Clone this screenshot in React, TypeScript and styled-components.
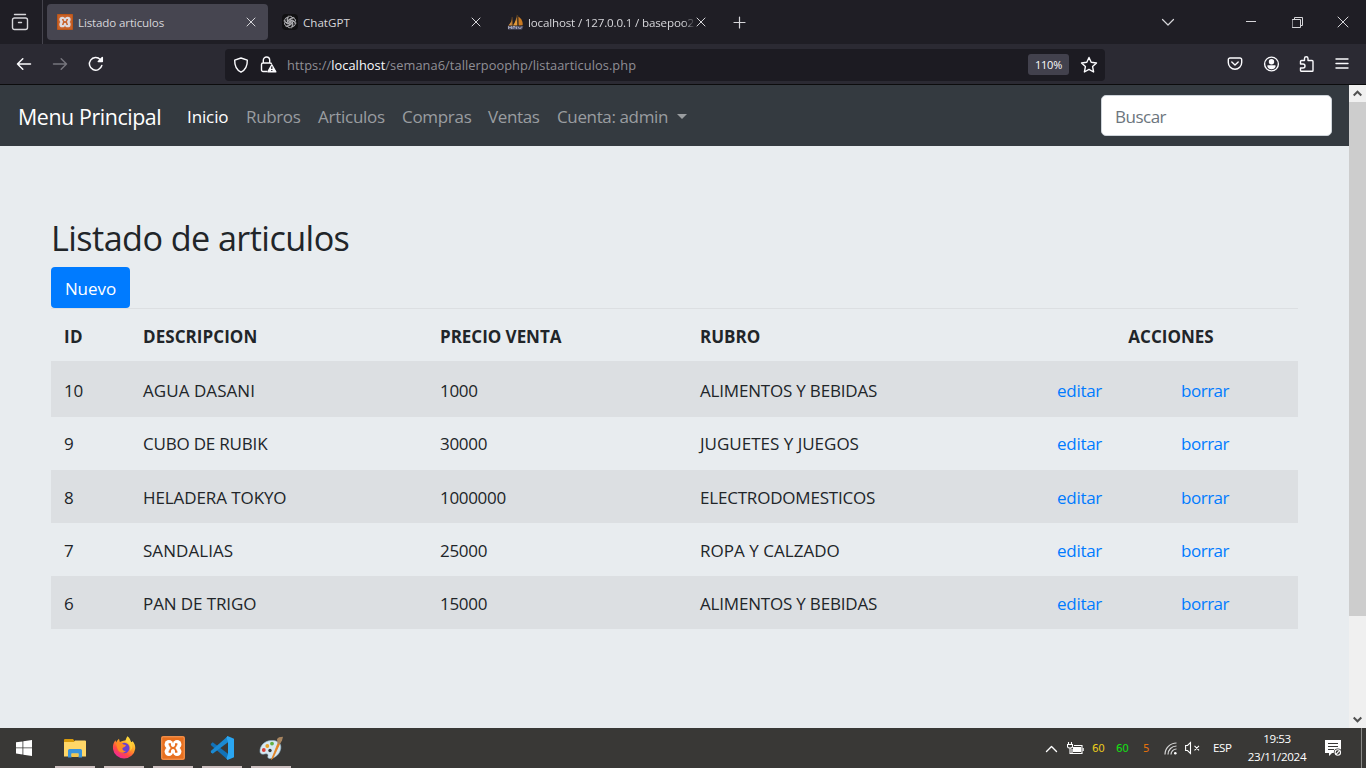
import React from 'react';
import styled, { createGlobalStyle, css } from 'styled-components';

const GlobalStyle = createGlobalStyle`
  *, *::before, *::after { box-sizing: border-box; }
  body {
    margin: 0;
    overflow: hidden;
    font-family: 'Open Sans', 'Noto Sans', sans-serif;
  }
`;

const Desktop = styled.div`
  display: flex;
  flex-direction: column;
  width: 1366px;
  height: 768px;
`;

const Text = styled.span<{ $ls?: number }>`
  letter-spacing: ${(p) => p.$ls ?? 0}px;
  white-space: pre;
`;

/* ---------- browser chrome ---------- */

const TabStrip = styled.header`
  display: flex;
  align-items: center;
  height: 44px;
  background: #1f1e25;
  color: #d6d6da;
`;

const FirefoxView = styled.div`
  display: flex;
  align-items: center;
  width: 43px;
  height: 44px;
  padding-left: 11px;
  border-right: 1px solid #45444d;
`;

const Tab = styled.div<{ $active?: boolean; $width: number }>`
  display: flex;
  align-items: center;
  width: ${(p) => p.$width}px;
  height: 36px;
  margin-left: 4px;
  padding: 0 12px 0 10px;
  border-radius: 4px;
  background: ${(p) => (p.$active ? '#464550' : 'transparent')};
`;

const TabTitle = styled.div<{ $fade?: boolean }>`
  flex: 1;
  min-width: 0;
  margin-left: 5px;
  padding-top: 1px;
  overflow: hidden;
  font-size: 11.6px;
  line-height: 18px;
  white-space: nowrap;
  ${(p) =>
    p.$fade &&
    css`
      margin-left: 4px;
      mask-image: linear-gradient(to right, #000 155px, transparent 168px);
    `}
`;

const NewTab = styled.div`
  display: flex;
  margin-left: 15px;
`;

const WindowControls = styled.div`
  display: flex;
  align-items: center;
  margin-left: auto;
  padding-right: 17px;
`;

const ControlSlot = styled.div<{ $gap: number }>`
  display: flex;
  margin-left: ${(p) => p.$gap}px;
`;

const Toolbar = styled.div`
  display: flex;
  align-items: center;
  height: 41px;
  padding: 0 17px 0 16px;
  background: #2b2a33;
  border-bottom: 1px solid #0c0c0d;
  color: #fbfbfe;
`;

const NavButtons = styled.div`
  display: flex;
  gap: 20px;
  width: 209px;
`;

const UrlBar = styled.div`
  display: flex;
  align-items: center;
  width: 880px;
  height: 32px;
  margin-top: 1px;
  padding: 0 7px 0 8px;
  border-radius: 4px;
  background: #1c1b22;
`;

const Url = styled.div`
  flex: 1;
  margin-left: 10px;
  font-size: 12.8px;
  line-height: 20px;
  letter-spacing: 0.064px;
  color: #908f96;
  b { font-weight: 400; color: #fbfbfe; }
`;

const Zoom = styled.div`
  width: 41px;
  height: 21px;
  margin-right: 11px;
  border-radius: 3px;
  background: #42414d;
  font-size: 11px;
  line-height: 21px;
  text-align: center;
`;

const ToolbarActions = styled.div`
  display: flex;
  align-items: center;
  gap: 16px;
  margin-left: auto;
`;

/* ---------- web page ---------- */

const Viewport = styled.div`
  display: flex;
  height: 643px;
`;

const Page = styled.div`
  width: 1349px;
  background: #e8ecef;
  color: #212529;
`;

const Navbar = styled.nav`
  display: flex;
  align-items: center;
  height: 61px;
  padding: 0 17px 0 18px;
  background: #343a40;
`;

const Brand = styled.div`
  width: 169px;
  padding-top: 2px;
  font-size: 21.4px;
  line-height: 32px;
  color: #fff;
`;

const NavItem = styled.div<{ $active?: boolean; $width: number }>`
  display: flex;
  align-items: center;
  width: ${(p) => p.$width}px;
  padding-top: 2px;
  font-size: 17px;
  line-height: 26px;
  color: ${(p) => (p.$active ? '#fff' : '#9a9da0')};
`;

const Caret = styled.i`
  margin: 0 0 0 9px;
  border-top: 5px solid currentColor;
  border-left: 5px solid transparent;
  border-right: 5px solid transparent;
`;

const Search = styled.div`
  width: 231px;
  height: 41px;
  margin-left: auto;
  padding-left: 13px;
  border: 1px solid #ced4da;
  border-radius: 5px;
  background: #fff;
  font-size: 17px;
  line-height: 41px;
  color: #6c757d;
`;

const Content = styled.main`
  padding: 69px 51px 0;
`;

const Title = styled.h1`
  margin: 0;
  height: 52px;
  font-size: 34.2px;
  font-weight: 400;
  line-height: 45px;
`;

const NewButton = styled.div`
  width: 79px;
  height: 41px;
  border-radius: 4px;
  background: #007bff;
  color: #fff;
  font-size: 17px;
  line-height: 43px;
  text-align: center;
`;

const Table = styled.table`
  width: 1247px;
  table-layout: fixed;
  border-collapse: separate;
  border-spacing: 0;
  font-size: 17px;
  line-height: 26px;
`;

const Th = styled.th<{ $width?: number }>`
  width: ${(p) => p.$width}px;
  height: 53px;
  padding: 3px 13px 0;
  border-top: 1px solid #dcdfe2;
  text-align: left;
  &:last-child { text-align: center; }
`;

const Row = styled.tr<{ $height: number; $striped: boolean }>`
  height: ${(p) => p.$height}px;
  background: ${(p) => (p.$striped ? '#dcdfe2' : 'transparent')};
`;

const Td = styled.td<{ $shift?: number }>`
  padding: ${(p) => p.$shift ?? 2}px 13px 0;
`;

const Action = styled(Td)<{ $last?: boolean }>`
  padding-left: ${(p) => (p.$last ? 10 : 13)}px;
  color: #007bff;
`;

const Scrollbar = styled.div`
  display: flex;
  flex-direction: column;
  align-items: center;
  width: 17px;
  background: #f0f0f0;
`;

const ScrollArrow = styled.div`
  display: flex;
  align-items: center;
  height: 17px;
`;

const Thumb = styled.div`
  width: 17px;
  height: 514px;
  margin-bottom: auto;
  background: #cdcdcd;
`;

/* ---------- taskbar ---------- */

const Taskbar = styled.footer`
  display: flex;
  height: 40px;
  background: #393836;
  color: #fff;
`;

const StartButton = styled.div`
  display: flex;
  align-items: center;
  width: 55px;
  padding-left: 16px;
`;

const AppButton = styled.div`
  display: flex;
  align-items: center;
  justify-content: center;
  width: 40px;
  margin-right: 9px;
  padding-top: 2px;
  border-bottom: 2px solid #cbbfbf;
`;

const Tray = styled.div`
  display: flex;
  align-items: center;
  margin-left: auto;
  font-size: 11.6px;
  line-height: 18px;
`;

const TraySlot = styled.div<{ $width: number }>`
  display: flex;
  align-items: center;
  width: ${(p) => p.$width}px;
`;

const Reading = styled.div<{ $color: string }>`
  width: 24px;
  color: ${(p) => p.$color};
  font-family: 'DejaVu Sans', sans-serif;
  font-size: 10.4px;
  letter-spacing: -0.4px;
`;

const Clock = styled.div`
  display: flex;
  flex-direction: column;
  align-items: center;
  width: 64px;
  margin-right: 16px;
`;

const PeekEdge = styled.div`
  width: 5px;
  height: 40px;
  border-left: 1px solid #8a8a88;
`;

/* ---------- icons ---------- */

const Stroke = ({ size = 16, w = 1.3, children, vb }: { size?: number; w?: number; vb?: string; children: React.ReactNode }) => (
  <svg width={size} height={size} viewBox={vb ?? `0 0 ${size} ${size}`} fill="none" stroke="currentColor" strokeWidth={w} strokeLinecap="round" strokeLinejoin="round">
    {children}
  </svg>
);

const XamppIcon = ({ size, muted }: { size: number; muted?: boolean }) => {
  const back = muted ? '#c8622a' : '#e8701f';
  const front = muted ? '#dedbe0' : '#fff';
  return (
    <svg width={size} height={size} viewBox="0 0 24 24">
      <rect width="24" height="24" rx="2" fill={back} />
      <rect x="0.8" y="0.8" width="22.4" height="22.4" rx="1.5" fill="none" stroke={muted ? '#b4500f' : '#f19a5c'} strokeWidth="1" />
      <g fill={front}>
        <circle cx="7.900" cy="8.400" r="4.300" />
        <circle cx="16.100" cy="8.400" r="4.300" />
        <circle cx="7.900" cy="15.600" r="4.300" />
        <circle cx="16.100" cy="15.600" r="4.300" />
        <rect x="6" y="8" width="12" height="8" />
      </g>
      <path d="M7.600 8.300H9C9 11 11 12 12 12S15 13 15 15.700H16.400M16.400 8.300H15C15 11 13 12 12 12S9 13 9 15.700H7.600" fill="none" stroke={back} strokeWidth="1.900" />
    </svg>
  );
};

const ChatIcon = () => (
  <svg width="16" height="16" viewBox="0 0 16 16">
    <rect width="16" height="16" rx="4" fill="#101012" />
    <g fill="none" stroke="#c4c4c8" strokeWidth="0.8">
      {[0, 60, 120, 180, 240, 300].map((a) => (
        <path key={a} transform={`rotate(${a} 8 8)`} d="M5.800 9.200V4.600A2.500 2.500 0 0 1 10.300 3.200M7.200 8.400V5.200L10 3.600A2.400 2.400 0 0 1 12.500 3.900" />
      ))}
    </g>
  </svg>
);

const SailIcon = () => (
  <svg width="17" height="16" viewBox="0 0 17 16">
    <path d="M5 2.500C5.200 6 4 9 1.200 11.500H5.600Z" fill="#d08b3c" />
    <path d="M9.300 .3C9.800 4 8.600 8 6 11.500H10.400Z" fill="#e39a3a" />
    <path d="M11.300 2.600C15 5 16 8.500 15.600 11.300L11.600 11.500Z" fill="#c97a22" />
    <path d="M10.600 1V11.500M5.200 3V11" stroke="#6f4a22" strokeWidth=".7" />
    <path d="M.8 12.200H16.400L15 15.600H1Z" fill="#55566f" />
    <path d="M1.500 15V12.300L3 14 4.500 12.300V15M6 15V12.500H8V14.200M9.500 15V12.500M11 12.500L12.500 15M14.800 12.500L13 15" stroke="#a9abc0" strokeWidth=".9" fill="none" />
  </svg>
);

const CloseIcon = () => (
  <Stroke size={10} w={1}><path d="M1 1L9 9M9 1L1 9" /></Stroke>
);

const FolderIcon = () => (
  <svg width="22" height="19" viewBox="0 0 22 19">
    <path d="M0 1A1 1 0 0 1 1 0H9L10.500 2H21A1 1 0 0 1 22 3V17H0Z" fill="#d99b0b" />
    <path d="M0 3H10L11 1.500H21A1 1 0 0 1 22 2.500V17.500H0Z" fill="#ffd768" />
    <path d="M4 18.500V11.500A1.500 1.500 0 0 1 5.500 10H16.500A1.500 1.500 0 0 1 18 11.500V18.500H14.500V14.500H7.500V18.500Z" fill="#3b94da" />
    <path d="M7.500 18V14.500H14.500V18Z" fill="#f5c64d" />
  </svg>
);

const FirefoxIcon = () => (
  <svg width="24" height="24" viewBox="0 0 24 24">
    <defs>
      <linearGradient id="fox" x1=".8" y1=".1" x2=".25" y2=".95">
        <stop offset="0" stopColor="#ffe43f" />
        <stop offset=".4" stopColor="#ff9a26" />
        <stop offset=".7" stopColor="#ff4a45" />
        <stop offset="1" stopColor="#f0269b" />
      </linearGradient>
    </defs>
    <path d="M15.500 .3C18 2.500 18.500 4.500 19 6C20 6.200 20.500 5.500 20.500 5C22.800 7.500 23.500 10.500 23.200 13A11.200 11 0 0 1 1 13C.6 9 1.600 6.500 3.500 4.200L4.200 6.500C5 5 6 3.500 7 2.800L7.800 6C10.500 4.600 13 4.500 13.600 4.200C14 3 14.500 1.500 15.500 .3Z" fill="url(#fox)" />
    <circle cx="12.300" cy="12" r="5.200" fill="#6c3fd0" />
    <path d="M4 7C7 5.500 9.500 6.500 11.500 8.500L14 9C13.500 11 11.500 11 10.500 12C10 14 12 15.500 14 14.700C11 18.500 6 16.500 5.200 12Z" fill="#ff8a24" />
    <path d="M13.500 5.500C17.500 7 19.500 10.500 18 15C21 12.500 21 8.500 18.500 5.500L15.500 1.500Z" fill="#ffcf38" />
  </svg>
);

const CodeIcon = () => (
  <svg width="24" height="24" viewBox="0 0 24 24">
    <path d="M1 7.700L2.700 6.200 18 17.800V24L.8 9Z" fill="#1272b8" />
    <path d="M1 16.200L2.700 17.800 18 6.200V0L.8 15Z" fill="#1b8ad3" />
    <path d="M17.500 0L24 2.800V21.200L17.500 24 16.500 22.500 18 18V6L16.500 1.500Z" fill="#2aa6f2" />
  </svg>
);

const PaintIcon = () => (
  <svg width="25" height="24" viewBox="0 0 25 24">
    <path d="M12.500 4.500C5 4.800 .8 10 1 15.500C1.200 18.500 4 18.500 6.500 17.800C9 17.200 9.500 19 8.800 20.500C8.500 23 12 23.200 15 21.500C20 19 22.800 13.500 21.500 9C20.500 5.800 17 4.300 12.500 4.500Z" fill="#d6e8f2" stroke="#8fb6cc" strokeWidth=".6" />
    <circle cx="8.300" cy="10" r="1.900" fill="#e7a12a" />
    <circle cx="13" cy="7.600" r="1.900" fill="#61b044" />
    <circle cx="4.800" cy="14" r="1.900" fill="#d9413a" />
    <circle cx="11" cy="14.500" r="1.700" fill="#3a3a3a" />
    <path d="M18.800 7.500L20.500 8.300 14 22 12.500 23.500Z" fill="#e28221" stroke="#e28221" strokeWidth=".8" />
    <path d="M18.500 7.500L18 3L20 1.200L24 .8L23 4.500L20.800 8.200Z" fill="#a88560" />
  </svg>
);

/* ---------- data ---------- */

type Cell = [string, number];
const rows: { id: Cell; name: Cell; price: Cell; category: Cell; height: number; shift: number }[] = [
  { id: ['10', -0.24], name: ['AGUA DASANI', 0.06], price: ['1000', -0.3], category: ['ALIMENTOS Y BEBIDAS', -0.19], height: 56, shift: 4 },
  { id: ['9', 0], name: ['CUBO DE RUBIK', -0.2], price: ['30000', -0.3], category: ['JUGUETES Y JUEGOS', 0], height: 53, shift: 1 },
  { id: ['8', 0], name: ['HELADERA TOKYO', -0.09], price: ['1000000', -0.32], category: ['ELECTRODOMESTICOS', -0.2], height: 53, shift: 2 },
  { id: ['7', 0], name: ['SANDALIAS', 0.05], price: ['25000', -0.3], category: ['ROPA Y CALZADO', 0.03], height: 53, shift: 2 },
  { id: ['6', 0], name: ['PAN DE TRIGO', -0.1], price: ['15000', -0.3], category: ['ALIMENTOS Y BEBIDAS', -0.19], height: 53, shift: 2 },
];

const Browser = () => (
  <>
    <TabStrip>
      <FirefoxView>
        <Stroke size={18} w={1.4}>
          <path d="M3.500 1.500H14.500M3.500 5H14.500A2 2 0 0 1 16.500 7V14.500A2 2 0 0 1 14.500 16.500H3.500A2 2 0 0 1 1.500 14.500V7A2 2 0 0 1 3.500 5ZM7.500 9.500H10.500" />
        </Stroke>
      </FirefoxView>
      <Tab $active $width={221}>
        <XamppIcon size={16} muted />
        <TabTitle><Text $ls={-0.146}>Listado articulos</Text></TabTitle>
        <CloseIcon />
      </Tab>
      <Tab $width={221}>
        <ChatIcon />
        <TabTitle><Text>ChatGPT</Text></TabTitle>
        <CloseIcon />
      </Tab>
      <Tab $width={221}>
        <SailIcon />
        <TabTitle $fade><Text $ls={-0.166}>localhost / 127.0.0.1 / basepoo2</Text></TabTitle>
        <CloseIcon />
      </Tab>
      <NewTab><Stroke size={13} w={1.2}><path d="M6.500 1V12M1 6.500H12" /></Stroke></NewTab>
      <WindowControls>
        <Stroke size={14} w={1.2}><path d="M1.500 4.500L7 10 12.500 4.500" /></Stroke>
        <ControlSlot $gap={71}><Stroke size={10} w={1}><path d="M0 4.500H10" /></Stroke></ControlSlot>
        <ControlSlot $gap={36}>
          <Stroke size={11} w={1}><path d="M.5 2.500H8.500V10.500H.5ZM2.500 2.500V.5H10.500V8.500H8.500" /></Stroke>
        </ControlSlot>
        <ControlSlot $gap={34}><Stroke size={12} w={1}><path d="M1 1L11 11M11 1L1 11" /></Stroke></ControlSlot>
      </WindowControls>
    </TabStrip>
    <Toolbar>
      <NavButtons>
        <Stroke w={1.5}><path d="M14.500 8H1.500M6.800 2.800L1.500 8 6.800 13.200" /></Stroke>
        <svg width="16" height="16" viewBox="0 0 16 16" fill="none" stroke="#76757d" strokeWidth="1.500" strokeLinecap="round" strokeLinejoin="round">
          <path d="M1.500 8H14.500M9.200 2.800L14.500 8 9.200 13.200" />
        </svg>
        <Stroke w={1.5}><path d="M13.800 9.500A6.300 6.300 0 1 1 12.300 3.500L14 5" /><path d="M14.300 1.500V5.500H10.300Z" fill="currentColor" /></Stroke>
      </NavButtons>
      <UrlBar>
        <Stroke w={1.4}><path d="M8 1L14.300 3.200C14.500 9 12.500 12.800 8 15.200C3.500 12.800 1.500 9 1.700 3.200Z" /></Stroke>
        <ControlSlot $gap={11}>
          <svg width="17" height="17" viewBox="0 0 17 17" fill="none" stroke="currentColor" strokeWidth="1.400">
            <path d="M7 15.500H3A1.500 1.500 0 0 1 1.500 14V8.500A1.500 1.500 0 0 1 3 7H10A1.500 1.500 0 0 1 11.500 8M3.300 7V4.200A3.200 3.200 0 0 1 9.700 4.200V7" />
            <path d="M11.800 8.800L15.800 15.800H7.800Z" fill="currentColor" strokeLinejoin="round" />
            <path d="M11.800 10.500V13M11.800 14V15" stroke="#1c1b22" strokeWidth="1.200" />
          </svg>
        </ControlSlot>
        <Url>https://<b>localhost</b>/semana6/tallerpoophp/listaarticulos.php</Url>
        <Zoom><Text $ls={-0.24}>110%</Text></Zoom>
        <Stroke size={18} w={1.4}><path d="M9 1.500L11.200 6.300 16.500 7 12.600 10.600 13.600 16 9 13.400 4.400 16 5.400 10.600 1.500 7 6.800 6.300Z" /></Stroke>
      </UrlBar>
      <ToolbarActions>
        <Stroke size={20} w={1.4} vb="-2 -2 20 20"><path d="M3 2H13A1.700 1.700 0 0 1 14.700 3.700V6.500A6.700 6.700 0 0 1 1.300 6.500V3.700A1.700 1.700 0 0 1 3 2ZM4.800 6L8 9 11.200 6" /></Stroke>
        <Stroke size={20} w={1.4} vb="-2.500 -2 20 20">
          <circle cx="8" cy="8" r="6.900" />
          <circle cx="8" cy="5.800" r="2" fill="currentColor" />
          <path d="M4.500 10H11.500C11 12 9.500 12.500 8 12.500S5 12 4.500 10Z" fill="currentColor" />
        </Stroke>
        <Stroke size={20} w={1.4} vb="-2 -2 20 20"><path d="M1.500 8V5.500A1 1 0 0 1 2.500 4.500H5.500V2.500A1.700 1.700 0 0 1 9 2.500V4.500H13A1 1 0 0 1 14 5.500V14.500A.8 .8 0 0 1 13.200 15.300H2.500A1 1 0 0 1 1.500 14.300V12H4A1.900 1.900 0 0 0 4 8Z" /></Stroke>
        <ControlSlot $gap={2}><Stroke size={14} w={1.4}><path d="M1 2H13M1 6.500H13M1 11H13" /></Stroke></ControlSlot>
      </ToolbarActions>
    </Toolbar>
  </>
);

const ArticlesPage = () => (
  <Page>
    <Navbar>
      <Brand><Text $ls={-0.42}>Menu Principal</Text></Brand>
      <NavItem $active $width={59}><Text $ls={-0.12}>Inicio</Text></NavItem>
      <NavItem $width={72}><Text $ls={-0.36}>Rubros</Text></NavItem>
      <NavItem $width={84}><Text $ls={-0.26}>Articulos</Text></NavItem>
      <NavItem $width={86}><Text $ls={-0.3}>Compras</Text></NavItem>
      <NavItem $width={69}><Text $ls={-0.36}>Ventas</Text></NavItem>
      <NavItem $width={135}><Text $ls={-0.37}>Cuenta: admin</Text><Caret /></NavItem>
      <Search><Text $ls={-0.5}>Buscar</Text></Search>
    </Navbar>
    <Content>
      <Title><Text $ls={-0.58}>Listado de articulos</Text></Title>
      <NewButton><Text $ls={-0.05}>Nuevo</Text></NewButton>
      <Table>
        <thead>
          <tr>
            <Th $width={79}><Text $ls={0.4}>ID</Text></Th>
            <Th $width={297}><Text $ls={0.06}>DESCRIPCION</Text></Th>
            <Th $width={260}><Text $ls={-0.03}>PRECIO VENTA</Text></Th>
            <Th $width={357}><Text $ls={0}>RUBRO</Text></Th>
            <Th $width={254} colSpan={2}><Text $ls={0}>ACCIONES</Text></Th>
          </tr>
        </thead>
        <tbody>
          {rows.map((r, i) => (
            <Row key={r.id[0]} $height={r.height} $striped={i % 2 === 0}>
              {[r.id, r.name, r.price, r.category].map(([label, ls], k) => (
                <Td key={k} $shift={r.shift}><Text $ls={ls}>{label}</Text></Td>
              ))}
              <Action $shift={r.shift}><Text $ls={-0.28}>editar</Text></Action>
              <Action $shift={r.shift} $last><Text $ls={-0.48}>borrar</Text></Action>
            </Row>
          ))}
        </tbody>
      </Table>
    </Content>
  </Page>
);

export default function App() {
  return (
    <Desktop>
      <GlobalStyle />
      <Browser />
      <Viewport>
        <ArticlesPage />
        <Scrollbar>
          <ScrollArrow><svg width="9" height="7" viewBox="0 0 9 7" fill="none" stroke="#505050" strokeWidth="2"><path d="M.7 5.500L4.500 1.700 8.300 5.500" /></svg></ScrollArrow>
          <Thumb />
          <ScrollArrow><svg width="9" height="7" viewBox="0 0 9 7" fill="none" stroke="#505050" strokeWidth="2"><path d="M.7 1.500L4.500 5.300 8.300 1.500" /></svg></ScrollArrow>
        </Scrollbar>
      </Viewport>
      <Taskbar>
        <StartButton>
          <svg width="16" height="16" viewBox="0 0 16 16" fill="#fff"><path d="M0 2.300L6.500 1.400V7.500H0ZM7.300 1.300L16 0V7.500H7.300ZM0 8.300H6.500V14.500L0 13.600ZM7.300 8.300H16V16L7.300 14.700Z" /></svg>
        </StartButton>
        <AppButton><FolderIcon /></AppButton>
        <AppButton><FirefoxIcon /></AppButton>
        <AppButton><XamppIcon size={24} /></AppButton>
        <AppButton><CodeIcon /></AppButton>
        <AppButton><PaintIcon /></AppButton>
        <Tray>
          <TraySlot $width={22}><Stroke size={13} w={1.4}><path d="M1.500 9.500L6.500 4.500 11.500 9.500" /></Stroke></TraySlot>
          <TraySlot $width={25}>
            <svg width="17" height="13" viewBox="0 0 17 13" fill="none" stroke="#fff" strokeWidth="1.100">
              <path d="M1.500 0V2M4.500 0V2M.5 2.500H5.500V4.500Q5.500 6 3 6T.5 4.500ZM3 6V11.500H5M7 3.500H15V11.500H5V7" />
              <path d="M6.500 5.500H13.500V9.500H6.500Z" fill="#fff" />
              <path d="M16.200 6V9" />
            </svg>
          </TraySlot>
          <Reading $color="#e8c81c">60</Reading>
          <Reading $color="#14e014">60</Reading>
          <Reading $color="#e2700c">&nbsp;5</Reading>
          <TraySlot $width={21}>
            <svg width="13" height="13" viewBox="0 0 13 13" fill="none" stroke="#d8d8d8" strokeWidth="1.200">
              <path d="M1 12.500A11.500 11.500 0 0 1 12.500 1M4 12.500A8.500 8.500 0 0 1 12.500 4M7 12.500A5.500 5.500 0 0 1 12.500 7" />
              <circle cx="11.300" cy="11.300" r="1.300" fill="#fff" stroke="none" />
            </svg>
          </TraySlot>
          <TraySlot $width={28}>
            <svg width="16" height="14" viewBox="0 0 16 14" fill="none" stroke="#fff" strokeWidth="1.100">
              <path d="M.6 4.500H2.500L5.500 1.500V12.500L2.500 9.500H.6ZM9.500 4.800L14 9.300M14 4.800L9.500 9.300" />
            </svg>
          </TraySlot>
          <TraySlot $width={32}><Text $ls={-0.45}>ESP</Text></TraySlot>
          <Clock><Text $ls={-0.412}>19:53</Text><Text $ls={-0.3}>23/11/2024</Text></Clock>
          <TraySlot $width={36}>
            <svg width="17" height="17" viewBox="0 0 17 17">
              <path d="M0 0H16V13H7L4 16V13H0Z" fill="#fff" />
              <path d="M3 3.500H13M3 6.500H13M3 9.500H9" stroke="#393836" />
              <circle cx="12.800" cy="12.500" r="4" fill="#393836" />
              <circle cx="12.800" cy="12.500" r="2.700" fill="none" stroke="#fff" strokeWidth="1.100" />
              <path d="M11 14.300L14.600 10.700" stroke="#fff" strokeWidth="1.100" />
            </svg>
          </TraySlot>
          <PeekEdge />
        </Tray>
      </Taskbar>
    </Desktop>
  );
}
